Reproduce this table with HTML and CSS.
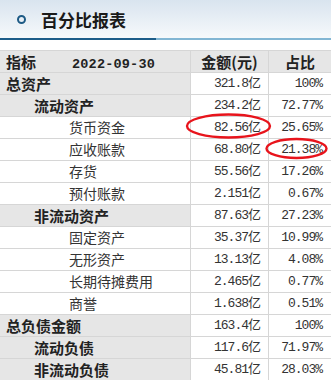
FILE: index.html
```html
<!DOCTYPE html>
<html lang="zh-CN">
<head>
<meta charset="utf-8">
<title>百分比报表</title>
<link rel="stylesheet" href="styles.css">
</head>
<body>
<div class="page">
  <div class="head">
    <span class="ring"></span>
    <h1 class="title">百分比报表</h1>
  </div>
  <div class="rule"></div>
  <table class="report">
    <colgroup><col class="c1"><col class="c2"><col class="c3"></colgroup>
    <tr class="thead">
      <td class="lab"><span class="k">指标</span><span class="date">2022-09-30</span></td>
      <td class="hc">金额(元)</td>
      <td class="hc">占比</td>
    </tr>
    <tr class="main"><td class="lab l0">总资产</td><td class="num">321.8亿</td><td class="num pc">100%</td></tr>
    <tr class="main"><td class="lab l1">流动资产</td><td class="num">234.2亿</td><td class="num pc">72.77%</td></tr>
    <tr class="sub"><td class="lab l2">货币资金</td><td class="num">82.56亿</td><td class="num pc">25.65%</td></tr>
    <tr class="sub"><td class="lab l2">应收账款</td><td class="num">68.80亿</td><td class="num pc">21.38%</td></tr>
    <tr class="sub"><td class="lab l2">存货</td><td class="num">55.56亿</td><td class="num pc">17.26%</td></tr>
    <tr class="sub"><td class="lab l2">预付账款</td><td class="num">2.151亿</td><td class="num pc">0.67%</td></tr>
    <tr class="main"><td class="lab l1">非流动资产</td><td class="num">87.63亿</td><td class="num pc">27.23%</td></tr>
    <tr class="sub"><td class="lab l2">固定资产</td><td class="num">35.37亿</td><td class="num pc">10.99%</td></tr>
    <tr class="sub"><td class="lab l2">无形资产</td><td class="num">13.13亿</td><td class="num pc">4.08%</td></tr>
    <tr class="sub"><td class="lab l2">长期待摊费用</td><td class="num">2.465亿</td><td class="num pc">0.77%</td></tr>
    <tr class="sub"><td class="lab l2">商誉</td><td class="num">1.638亿</td><td class="num pc">0.51%</td></tr>
    <tr class="main"><td class="lab l0">总负债金额</td><td class="num">163.4亿</td><td class="num pc">100%</td></tr>
    <tr class="main"><td class="lab l1">流动负债</td><td class="num">117.6亿</td><td class="num pc">71.97%</td></tr>
    <tr class="main"><td class="lab l1">非流动负债</td><td class="num">45.81亿</td><td class="num pc">28.03%</td></tr>
  </table>
  <svg class="marks" width="331" height="380" viewBox="0 0 331 380">
    <ellipse cx="228.5" cy="126" rx="41.5" ry="11.5" fill="none" stroke="#e8141c" stroke-width="2.4"/>
    <ellipse cx="296.5" cy="148.5" rx="30" ry="9.5" fill="none" stroke="#e8141c" stroke-width="2.4"/>
  </svg>
</div>
</body>
</html>
```

FILE: styles.css
```css
html, body {
  margin: 0;
  padding: 0;
  background: #fff;
}
.page {
  position: relative;
  width: 331px;
  height: 380px;
  overflow: hidden;
  font-family: "Noto Sans CJK SC", "Noto Sans", sans-serif;
  color: #333;
}
.head {
  height: 38px;
  display: flex;
  align-items: center;
  background: linear-gradient(#d9e4ef, #f6f9fb);
  padding-left: 17px;
  box-sizing: border-box;
}
.ring {
  width: 5px;
  height: 5px;
  border: 2.3px solid #1d5a85;
  border-radius: 50%;
  margin-top: 1px;
}
.title {
  margin: 0 0 0 15px;
  font-size: 17px;
  font-weight: 700;
  color: #1a1a1a;
  line-height: 1;
}
.rule {
  height: 2px;
  background: linear-gradient(to right, #1d5d89 0, #1d5d89 156px, #82b6d3 156px, #82b6d3 100%);
}
.report {
  margin-top: 10px;
  width: 331px;
  border-collapse: separate;
  border-spacing: 0;
  table-layout: fixed;
}
.c1 { width: 190px; }
.c2 { width: 78px; }
.c3 { width: 63px; }
.report tr { height: 22px; }
.report td {
  height: 21px;
  max-height: 21px;
  padding: 0;
  border-top: 1px solid #d6d6d6;
  white-space: nowrap;
  vertical-align: middle;
  line-height: 21px;
  overflow: hidden;
}
.report td span { line-height: 1; }
.report td + td { border-left: 1px solid #d6d6d6; }
.thead td {
  background: #e6e6e6;
  font-weight: 700;
  color: #222;
  font-size: 15px;
}
.thead .hc { text-align: center; }
.k { padding-left: 6px; }
.date {
  font-family: "Liberation Mono", monospace;
  font-size: 13.5px;
  letter-spacing: 0.2px;
  margin-left: 36px;
}
.main .lab {
  background: #e6e6e6;
  font-weight: 700;
  color: #222;
  font-size: 15px;
}
.sub .lab {
  font-size: 14px;
  color: #333;
}
.report td.l0 { padding-left: 6px; }
.report td.l1 { padding-left: 34px; }
.report td.l2 { padding-left: 69px; }
.report td.num {
  text-align: right;
  font-family: "Liberation Mono", "Noto Sans CJK SC", monospace;
  font-size: 13px;
  letter-spacing: -1px;
  padding-right: 8px;
  color: #333;
}
.report td.num.pc { padding-right: 9px; }
.marks {
  position: absolute;
  left: 0;
  top: 0;
  pointer-events: none;
}
```
